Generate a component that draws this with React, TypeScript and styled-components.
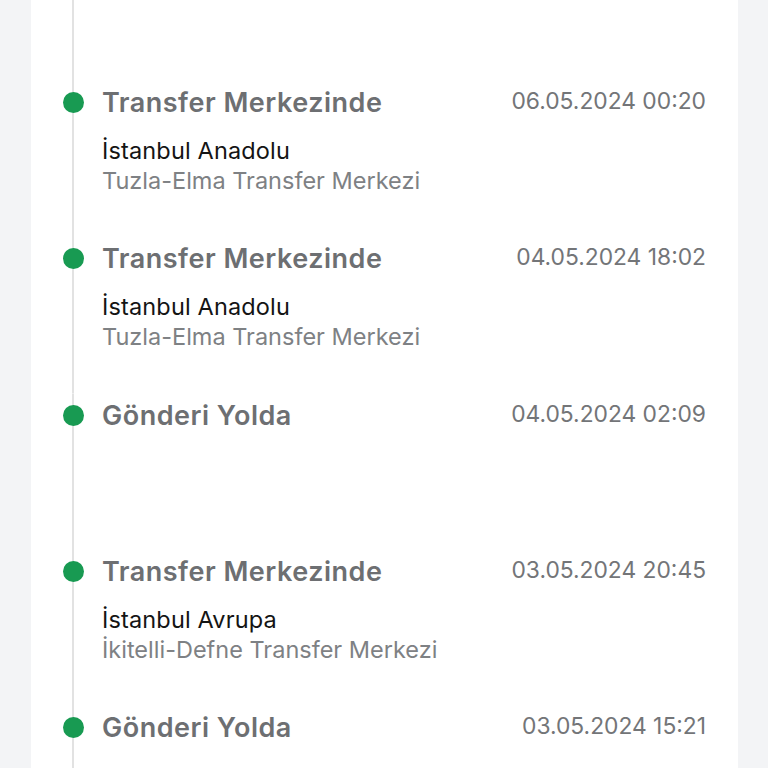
import React from "react";
import styled, { createGlobalStyle } from "styled-components";

const Global = createGlobalStyle`
  html, body { margin: 0; padding: 0; background: #f3f4f6; }
  body { font-family: Inter, "Noto Sans", sans-serif; }
`;

const Page = styled.div`
  display: flex;
  height: 768px;
  overflow: hidden;
  padding-left: 31px;
`;

const Card = styled.div`
  width: 707px;
  background: #ffffff;
  display: flex;
  flex-direction: column;
`;

const Lead = styled.div`
  height: 81px;
  margin-left: 21px;
  width: 42px;
  background: linear-gradient(#e2e2e2, #e2e2e2) center / 2px 100% no-repeat;
  flex-shrink: 0;
`;

const Item = styled.div`
  display: grid;
  grid-template-columns: 42px 1fr auto;
  grid-template-rows: 44px auto auto 1fr;
  column-gap: 8px;
  height: 156.25px;
  padding: 0 32px 0 21px;
  flex-shrink: 0;
`;

const Rail = styled.div`
  grid-row: 1 / span 4;
  background: linear-gradient(#e2e2e2, #e2e2e2) center / 2px 100% no-repeat;
  display: flex;
  justify-content: center;
  align-items: flex-start;
  padding-top: 11px;
  box-sizing: border-box;
`;

const Dot = styled.span`
  width: 21px;
  height: 21px;
  border-radius: 50%;
  background: #189a52;
  display: block;
`;

const Title = styled.div`
  font-size: 27px;
  font-weight: 600;
  color: #6d6f72;
  line-height: 44px;
  letter-spacing: 0.5px;
  white-space: nowrap;
`;

const Date = styled.div`
  font-size: 22.8px;
  font-weight: 400;
  color: #737578;
  line-height: 40px;
  text-align: right;
  white-space: nowrap;
`;

const Place = styled.div`
  grid-column: 2 / span 2;
  font-size: 23.5px;
  color: #141414;
  line-height: 30px;
  margin-top: 11px;
  letter-spacing: 0.15px;
  white-space: nowrap;
`;

const Center = styled.div`
  grid-column: 2 / span 2;
  font-size: 23.5px;
  color: #7e8184;
  line-height: 30px;
  white-space: nowrap;
`;

type Ev = { title: string; date: string; place?: string; center?: string };

const events: Ev[] = [
  { title: "Transfer Merkezinde", date: "06.05.2024 00:20", place: "İstanbul Anadolu", center: "Tuzla-Elma Transfer Merkezi" },
  { title: "Transfer Merkezinde", date: "04.05.2024 18:02", place: "İstanbul Anadolu", center: "Tuzla-Elma Transfer Merkezi" },
  { title: "Gönderi Yolda", date: "04.05.2024 02:09" },
  { title: "Transfer Merkezinde", date: "03.05.2024 20:45", place: "İstanbul Avrupa", center: "İkitelli-Defne Transfer Merkezi" },
  { title: "Gönderi Yolda", date: "03.05.2024 15:21" },
];

export default function App() {
  return (
    <>
      <Global />
      <Page>
        <Card>
          <Lead />
          {events.map((e, i) => (
            <Item key={i}>
              <Rail>
                <Dot />
              </Rail>
              <Title>{e.title}</Title>
              <Date>{e.date}</Date>
              {e.place && <Place>{e.place}</Place>}
              {e.center && <Center>{e.center}</Center>}
            </Item>
          ))}
        </Card>
      </Page>
    </>
  );
}
